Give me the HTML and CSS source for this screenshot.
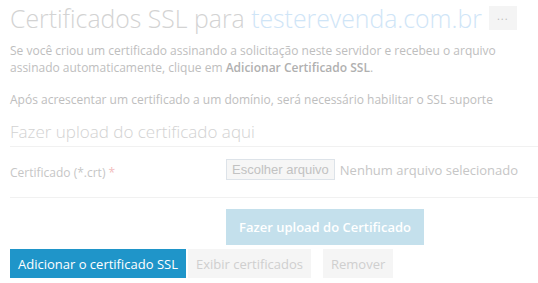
FILE: index.html
```html
<!DOCTYPE html>
<html lang="pt-br">
<head>
    <meta charset="UTF-8">
    <meta name="viewport" content="width=device-width, initial-scale=1.0">
    <link rel="stylesheet" href="styles.css">
    <title>Certificados SSL</title>
</head>
<body>

<div id="page">
    <h1 class="titulo">
        <span>Certificados SSL para <span class="dominio">testerevenda.com.br</span></span>
        <span class="mais">...</span>
    </h1>

    <p class="texto">Se você criou um certificado assinando a solicitação neste servidor e recebeu o arquivo assinado automaticamente, clique em <strong>Adicionar Certificado SSL</strong>.</p>

    <p class="texto" id="aviso">Após acrescentar um certificado a um domínio, será necessário habilitar o SSL suporte</p>

    <h3 class="secao">Fazer upload do certificado aqui</h3>

    <form>
        <div class="linha">
            <label class="rotulo">Certificado (*.crt) <span class="obrig">*</span></label>
            <div class="arquivo">
                <span class="escolher">Escolher arquivo</span>
                <span class="nenhum">Nenhum arquivo selecionado</span>
            </div>
        </div>

        <div class="enviar">
            <button type="button" class="btn-upload">Fazer upload do Certificado</button>
        </div>
    </form>

    <div class="barra">
        <button type="button" class="btn btn-azul">Adicionar o certificado SSL</button>
        <button type="button" class="btn btn-cinza">Exibir certificados</button>
        <button type="button" class="btn btn-cinza" id="remover">Remover</button>
    </div>
</div>

</body>
</html>
```

FILE: styles.css
```css
    body {
        margin: 0;
        background: white;
        font-family: "Open Sans", "DejaVu Sans", sans-serif;
    }

    #page {
        padding: 0 0 0 10px;
    }

    .titulo {
        display: flex;
        align-items: center;
        gap: 7px;
        height: 32px;
        font-size: 24.8px;
        font-weight: 300;
        color: #d3d3d3;
        margin: 2px 0 0;
        white-space: nowrap;
    }

    .dominio {
        color: #cfe5f7;
    }

    .mais {
        width: 28px;
        height: 24px;
        box-sizing: border-box;
        padding-top: 1px;
        line-height: 18px;
        background: #f4f4f4;
        color: #bdbdbd;
        font-size: 11px;
        font-weight: 400;
        text-align: center;
        letter-spacing: 1px;
    }

    .texto {
        font-size: 12px;
        line-height: 17px;
        color: #bebebe;
        margin: 8px 0 0;
    }

    #aviso {
        margin-top: 15px;
    }

    .texto strong {
        font-weight: 600;
        color: #b0b0b0;
    }

    .secao {
        font-size: 17px;
        font-weight: 300;
        color: #d2d2d2;
        margin: 12px 0 0;
        padding-bottom: 3px;
        border-bottom: 1px solid #f1f1f1;
    }

    .linha {
        display: grid;
        grid-template-columns: 216px 1fr;
        align-items: start;
        padding: 12px 0 16px;
        border-bottom: 1px solid #f1f1f1;
    }

    .rotulo {
        font-size: 12px;
        line-height: 17px;
        color: #c6c6c6;
        padding-top: 5px;
    }

    .obrig {
        color: #f2bcbc;
    }

    .arquivo {
        display: flex;
        align-items: center;
    }

    .escolher {
        font: 13px "Liberation Sans", Arial, sans-serif;
        color: #c2c2c2;
        background: #f6f6f6;
        border: 1px solid #dde3e9;
        padding: 2px 5px;
    }

    .nenhum {
        font-size: 13px;
        color: #c6c6c6;
        margin-left: 5px;
    }

    .enviar {
        padding: 11px 0 0 216px;
    }

    .btn-upload {
        height: 36px;
        padding: 0 13px;
        border: none;
        background: #c4e0ec;
        color: white;
        font: 600 13px "Open Sans", sans-serif;
    }

    .barra {
        display: flex;
        gap: 2px;
        margin-top: 4px;
    }

    .btn {
        height: 29px;
        padding: 0 8px;
        border: none;
        font: 13px "Open Sans", sans-serif;
    }

    .btn-azul {
        background: #1f95c9;
        color: white;
    }

    .btn-cinza {
        background: #f5f5f5;
        color: #cfcfcf;
    }

    #remover {
        margin-left: 10px;
    }
```
